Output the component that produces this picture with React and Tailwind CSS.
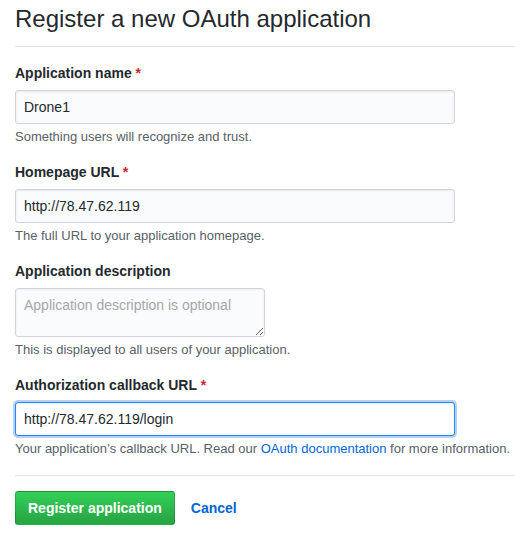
import React from 'react';

const Field = ({ label, required, note, children }) => (
    <div className="mb-4">
        <label className="block h-5 leading-5 text-[14px] font-bold text-[#24292e] mb-[7px]">
            {label}
            {required && <span className="text-[#cb2431]"> *</span>}
        </label>
        {children}
        <p className="mt-1 text-[13px] leading-[18px] text-[#586069]">{note}</p>
    </div>
);

const inputCls =
    "block w-[440px] h-[34px] px-2 text-[14px] text-[#24292e] bg-[#fafbfc] border border-[#d1d5da] rounded-[3px] shadow-[inset_0_1px_2px_rgba(27,31,35,0.075)] outline-none";

export default function App() {
    return (
        <div className="min-h-[537px] bg-white pl-[15px] font-['Liberation_Sans',Arial,sans-serif]">
            <h1 className="pt-[1px] pb-[9px] text-[24px] leading-[36px] font-normal text-[#24292e] border-b border-[#e1e4e8] mb-4">
                Register a new OAuth application
            </h1>

            <Field label="Application name" required note="Something users will recognize and trust.">
                <input className={inputCls} defaultValue="Drone1" />
            </Field>

            <Field label="Homepage URL" required note="The full URL to your application homepage.">
                <input className={inputCls} defaultValue="http://78.47.62.119" />
            </Field>

            <Field label="Application description" note="This is displayed to all users of your application.">
                <textarea
                    className="block w-[250px] h-[49px] px-2 py-[6px] text-[14px] leading-5 text-[#24292e] bg-[#fafbfc] border border-[#d1d5da] rounded-[3px] shadow-[inset_0_1px_2px_rgba(27,31,35,0.075)] outline-none placeholder:text-[#a3a8ad]"
                    placeholder="Application description is optional"
                />
            </Field>

            <Field
                label="Authorization callback URL"
                required
                note={
                    <>
                        Your application’s callback URL. Read our{' '}
                        <a href="#" className="text-[#0366d6]">OAuth documentation</a> for more information.
                    </>
                }
            >
                <input
                    className="block w-[440px] h-[34px] px-2 text-[14px] text-[#24292e] bg-white border border-[#2188ff] rounded-[3px] shadow-[inset_0_1px_2px_rgba(27,31,35,0.075),0_0_0_2px_rgba(3,102,214,0.3)] outline-none"
                    defaultValue="http://78.47.62.119/login"
                />
            </Field>

            <div className="border-t border-[#e1e4e8] mt-[17px] pt-[15px] flex items-center">
                <button className="h-[34px] px-3 text-[14px] font-bold text-white rounded-[3px] border border-[rgba(27,31,35,0.2)] bg-[linear-gradient(-180deg,#34d058_0%,#28a745_90%)]">
                    Register application
                </button>
                <a href="#" className="ml-4 text-[14px] font-bold text-[#0366d6]">Cancel</a>
            </div>
        </div>
    );
}
